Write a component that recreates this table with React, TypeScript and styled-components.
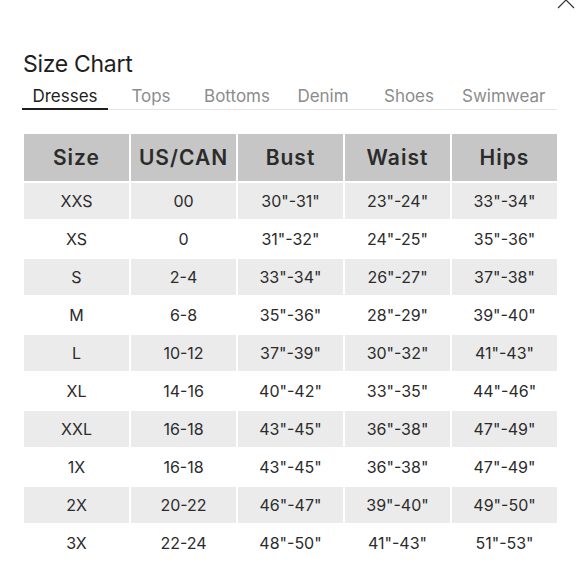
import { useState } from 'react'
import styled, { createGlobalStyle } from 'styled-components'

const GlobalStyle = createGlobalStyle`
  body {
    margin: 0;
    background: #fff;
    font-family: Inter, "Noto Sans", sans-serif;
    color: #222;
  }
`

const Page = styled.div`
  position: relative;
  width: 580px;
  height: 580px;
  overflow: hidden;
  padding: 49px 0 0 22px;
  box-sizing: border-box;
`

const Close = styled.svg`
  position: absolute;
  top: -9px;
  left: 557px;
`

const Title = styled.h1`
  margin: 0 0 0 1px;
  font-size: 23px;
  line-height: 30px;
  font-weight: 400;
  color: #1e1e1e;
  letter-spacing: -0.3px;
`

const Tabs = styled.div`
  display: flex;
  width: 535px;
  margin-top: 3px;
  border-bottom: 1px solid #e4e4e4;
`

const Tab = styled.button<{ active: boolean }>`
  min-width: 86px;
  padding: 3px 10px 1px;
  border: none;
  background: none;
  font-family: inherit;
  font-size: 17px;
  line-height: 22px;
  color: ${props => (props.active ? '#1e1e1e' : '#8c8c8c')};
  border-bottom: 2px solid ${props => (props.active ? '#1e1e1e' : 'transparent')};
  margin-bottom: -1px;
  cursor: pointer;
`

const Grid = styled.div`
  display: grid;
  grid-template-columns: repeat(5, 105px);
  grid-template-rows: 47px repeat(10, 36px);
  gap: 2px;
  margin: 24px 0 0 2px;
`

const HeadCell = styled.div`
  display: flex;
  align-items: center;
  justify-content: center;
  background: #c6c6c6;
  font-size: 21px;
  font-weight: 600;
  letter-spacing: 1px;
  color: #2b2b2b;
`

const Cell = styled.div<{ striped: boolean }>`
  display: flex;
  align-items: center;
  justify-content: center;
  background: ${props => (props.striped ? '#ebebeb' : '#fff')};
  font-size: 16px;
  color: #2b2b2b;
`

const tabs = ['Dresses', 'Tops', 'Bottoms', 'Denim', 'Shoes', 'Swimwear']
const headers = ['Size', 'US/CAN', 'Bust', 'Waist', 'Hips']
const rows = [
  ['XXS', '00', '30"-31"', '23"-24"', '33"-34"'],
  ['XS', '0', '31"-32"', '24"-25"', '35"-36"'],
  ['S', '2-4', '33"-34"', '26"-27"', '37"-38"'],
  ['M', '6-8', '35"-36"', '28"-29"', '39"-40"'],
  ['L', '10-12', '37"-39"', '30"-32"', '41"-43"'],
  ['XL', '14-16', '40"-42"', '33"-35"', '44"-46"'],
  ['XXL', '16-18', '43"-45"', '36"-38"', '47"-49"'],
  ['1X', '16-18', '43"-45"', '36"-38"', '47"-49"'],
  ['2X', '20-22', '46"-47"', '39"-40"', '49"-50"'],
  ['3X', '22-24', '48"-50"', '41"-43"', '51"-53"'],
]

function App() {
  const [active, setActive] = useState('Dresses')
  return (
    <Page>
      <GlobalStyle />
      <Close width="18" height="18" viewBox="0 0 18 18">
        <path d="M1 1L17 17M17 1L1 17" stroke="#333" strokeWidth="1.2" fill="none" />
      </Close>
      <Title>Size Chart</Title>
      <Tabs>
        {tabs.map(t => (
          <Tab key={t} active={t === active} onClick={() => setActive(t)}>
            {t}
          </Tab>
        ))}
      </Tabs>
      <Grid>
        {headers.map(h => (
          <HeadCell key={h}>{h}</HeadCell>
        ))}
        {rows.map((row, i) =>
          row.map((v, j) => (
            <Cell key={i + '-' + j} striped={i % 2 === 0}>
              {v}
            </Cell>
          ))
        )}
      </Grid>
    </Page>
  )
}
export default App
